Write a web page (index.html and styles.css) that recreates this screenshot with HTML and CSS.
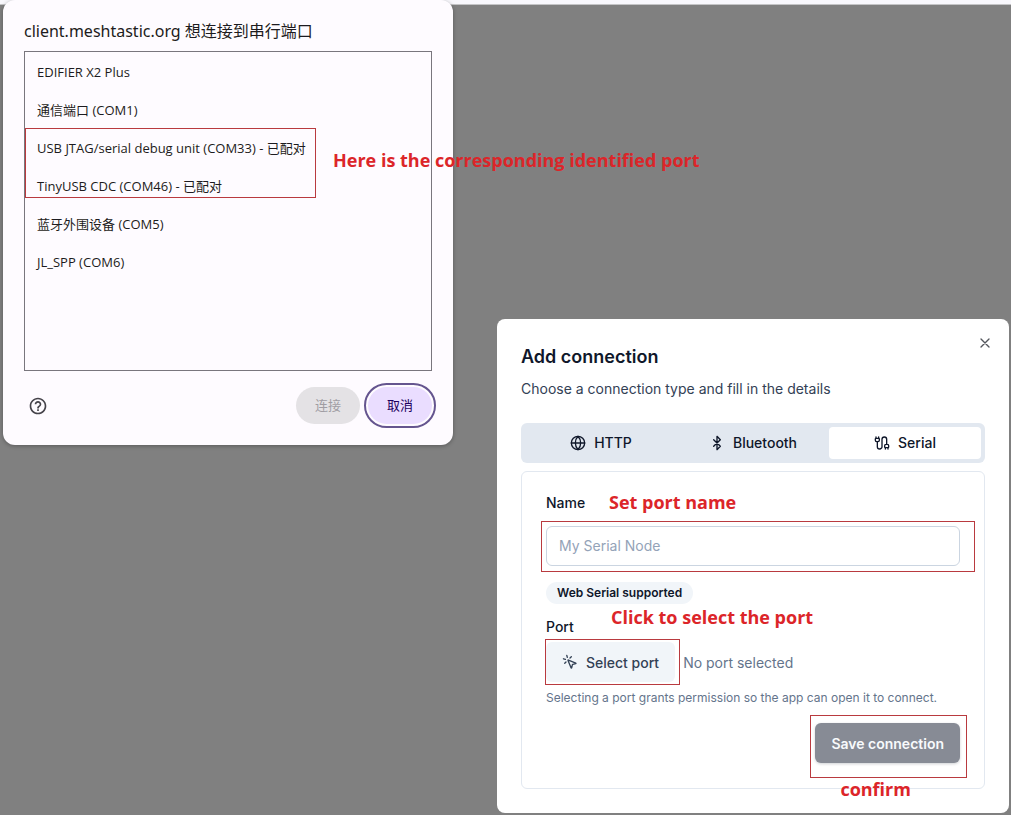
FILE: index.html
```html
<!DOCTYPE html>
<html lang="en">
<head>
  <meta charset="UTF-8">
  <meta name="viewport" content="width=device-width, initial-scale=1">
  <title>Add connection</title>
  <link rel="stylesheet" href="styles.css">
</head>
<body>
  <div class="top-strip"></div>

  <main class="desktop">
    <section class="chooser" role="dialog" aria-labelledby="chooser-title" lang="zh-CN">
      <h1 id="chooser-title">client.meshtastic.org 想连接到串行端口</h1>
      <ul class="port-list">
        <li>EDIFIER X2 Plus</li>
        <li>通信端口 (COM1)</li>
        <li>USB JTAG/serial debug unit (COM33) - 已配对</li>
        <li>TinyUSB CDC (COM46) - 已配对</li>
        <li>蓝牙外围设备 (COM5)</li>
        <li>JL_SPP (COM6)</li>
      </ul>
      <div class="chooser-footer">
        <button type="button" class="help-button" aria-label="帮助">
          <svg width="20" height="20" viewBox="0 0 24 24" fill="#45434a"><path d="M11 18h2v-2h-2v2zm1-16C6.48 2 2 6.48 2 12s4.48 10 10 10 10-4.48 10-10S17.52 2 12 2zm0 18c-4.41 0-8-3.59-8-8s3.59-8 8-8 8 3.59 8 8-3.59 8-8 8zm0-14c-2.210 0-4 1.790-4 4h2c0-1.100.900-2 2-2s2 .900 2 2c0 2-3 1.750-3 5h2c0-2.250 3-2.500 3-5 0-2.210-1.790-4-4-4z"/></svg>
        </button>
        <button type="button" class="pill-button" disabled>连接</button>
        <button type="button" class="pill-button cancel">取消</button>
      </div>
      <div class="mark mark-ports"></div>
      <p class="note note-ports" lang="en">Here is the corresponding identified port</p>
    </section>

    <section class="connection" role="dialog" aria-labelledby="connection-title">
      <button type="button" class="close-button" aria-label="Close">
        <svg class="icon" viewBox="0 0 24 24"><path d="M18 6 6 18M6 6l12 12"/></svg>
      </button>
      <h2 id="connection-title">Add connection</h2>
      <p class="description">Choose a connection type and fill in the details</p>

      <div class="tabs" role="tablist">
        <button type="button" role="tab">
          <svg class="icon" viewBox="0 0 24 24"><circle cx="12" cy="12" r="10"/><path d="M12 2a14.500 14.500 0 0 0 0 20 14.500 14.500 0 0 0 0-20M2 12h20"/></svg>
          HTTP
        </button>
        <button type="button" role="tab">
          <svg class="icon" viewBox="0 0 24 24"><path d="m7 7 10 10-5 5V2l5 5L7 17"/></svg>
          Bluetooth
        </button>
        <button type="button" role="tab" class="active" aria-selected="true">
          <svg class="icon" viewBox="0 0 24 24"><path d="M17 19a1 1 0 0 1-1-1v-2a2 2 0 0 1 2-2h2a2 2 0 0 1 2 2v2a1 1 0 0 1-1 1zM17 21v-2M19 14V6.500a1 1 0 0 0-7 0v11a1 1 0 0 1-7 0V10M21 21v-2M3 5V3M4 10a2 2 0 0 1-2-2V6a1 1 0 0 1 1-1h4a1 1 0 0 1 1 1v2a2 2 0 0 1-2 2zM7 5V3"/></svg>
          Serial
        </button>
      </div>

      <form class="panel">
        <div class="field name-field">
          <label for="node-name">Name</label>
          <input type="text" id="node-name" placeholder="My Serial Node">
          <div class="mark mark-name"></div>
          <span class="note note-name">Set port name</span>
        </div>

        <span class="badge">Web Serial supported</span>

        <div class="field port-field">
          <label for="select-port">Port</label>
          <div class="port-row">
            <button type="button" id="select-port" class="select-button">
              <svg class="icon" viewBox="0 0 24 24"><path d="M14 4.100 12 6M5.100 8l-2.900-.800M6 12l-1.900 2M7.200 2.200 8 5.100M9.037 9.690a.498.498 0 0 1 .653-.653l11 4.500a.500.500 0 0 1-.074.949l-4.349 1.041a1 1 0 0 0-.740.739l-1.040 4.350a.500.500 0 0 1-.950.074z"/></svg>
              Select port
            </button>
            <span class="port-status">No port selected</span>
          </div>
          <p class="hint">Selecting a port grants permission so the app can open it to connect.</p>
          <div class="mark mark-select"></div>
          <span class="note note-select">Click to select the port</span>
        </div>

        <div class="actions">
          <div class="save-wrap">
            <button type="button" class="save-button">Save connection</button>
            <div class="mark mark-save"></div>
            <span class="note note-save">confirm</span>
          </div>
        </div>
      </form>
    </section>
  </main>
</body>
</html>
```

FILE: styles.css
```css
* {
  box-sizing: border-box;
}

body {
  margin: 0;
  min-height: 100vh;
  display: flex;
  flex-direction: column;
  background: #808080;
  font-family: Inter, "Liberation Sans", sans-serif;
  font-size: 14px;
  color: #0f172a;
}

h1,
h2,
p,
ul {
  margin: 0;
  padding: 0;
}

button,
input {
  font-family: inherit;
  font-size: 14px;
}

button {
  border: none;
  cursor: pointer;
}

.icon {
  width: 16px;
  height: 16px;
  flex: none;
  fill: none;
  stroke: currentColor;
  stroke-width: 2;
  stroke-linecap: round;
  stroke-linejoin: round;
}

.top-strip {
  height: 5px;
  background: #f8f7fc;
  border-bottom: 1px solid #c4c4c6;
}

.desktop {
  flex: 1;
  display: flex;
  justify-content: space-between;
  padding: 0 2px 2px 3px;
}

/* browser serial port chooser */
.chooser {
  position: relative;
  align-self: flex-start;
  width: 450px;
  margin-top: -5px;
  padding: 19px 21px 21px;
  border-radius: 12px;
  background: #fefbff;
  box-shadow: 0 1px 4px rgba(0, 0, 0, 0.3);
  font-family: "Noto Sans", "Noto Sans CJK SC", sans-serif;
  color: #1d1b20;
}

.chooser h1 {
  font-size: 16px;
  font-weight: 400;
  line-height: 24px;
  margin-bottom: 8px;
}

.port-list {
  height: 320px;
  padding-top: 1px;
  border: 1px solid #79767d;
  list-style: none;
}

.port-list li {
  height: 38px;
  padding: 0 12px;
  font-family: "Open Sans", "Noto Sans CJK SC", sans-serif;
  font-size: 13px;
  line-height: 38px;
}

.chooser-footer {
  display: flex;
  align-items: center;
  gap: 8px;
  margin-top: 16px;
}

.help-button {
  display: flex;
  margin-right: auto;
  padding: 4px;
  background: none;
}

.pill-button {
  width: 64px;
  height: 37px;
  border-radius: 19px;
  padding: 0 0 2px;
  font-size: 13px;
  color: #a09da3;
  background: #e4e2e5;
}

.pill-button.cancel {
  color: #21005d;
  background: #eaddff;
  outline: 2px solid #65558f;
  outline-offset: 2px;
}

/* add connection dialog */
.connection {
  position: relative;
  align-self: flex-end;
  width: 512px;
  padding: 24px;
  border-radius: 8px;
  background: #fff;
}

.close-button {
  position: absolute;
  top: 16px;
  right: 16px;
  display: flex;
  padding: 0;
  color: #53565c;
  background: none;
}

.connection h2 {
  font-size: 18px;
  font-weight: 600;
  line-height: 28px;
}

.description {
  margin-top: 8px;
  line-height: 20px;
  color: #334155;
}

.tabs {
  display: grid;
  grid-template-columns: repeat(3, 1fr);
  margin-top: 24px;
  padding: 4px;
  height: 40px;
  border-radius: 6px;
  background: #e2e8f0;
}

.tabs button {
  display: flex;
  align-items: center;
  justify-content: center;
  gap: 8px;
  padding: 0 0 1px;
  border-radius: 4px;
  font-weight: 500;
  color: #0f172a;
  background: none;
}

.tabs .active {
  background: #fff;
}

.panel {
  display: flex;
  flex-direction: column;
  gap: 16px;
  margin-top: 8px;
  padding: 24px 24px 25px;
  border: 1px solid #e2e8f0;
  border-radius: 6px;
}

.field {
  position: relative;
}

.field label {
  display: block;
  font-weight: 500;
  line-height: 14px;
}

.field input {
  display: block;
  width: 100%;
  height: 40px;
  margin-top: 16px;
  padding: 0 12px 1px;
  border: 1px solid #cbd5e1;
  border-radius: 6px;
  background: #fff;
}

.field input::placeholder {
  color: #94a3b8;
}

.badge {
  align-self: flex-start;
  padding: 3px 11px;
  border-radius: 11px;
  font-size: 12px;
  font-weight: 600;
  line-height: 16px;
  background: #f1f5f9;
}

.port-row {
  display: flex;
  align-items: center;
  gap: 8px;
  margin-top: 8px;
}

.select-button {
  display: flex;
  align-items: center;
  gap: 8px;
  height: 40px;
  padding: 0 16px;
  border-radius: 6px;
  font-weight: 500;
  color: #334155;
  background: #f1f5f9;
}

.port-status {
  color: #64748b;
}

.hint {
  margin-top: 8px;
  font-size: 12px;
  line-height: 16px;
  color: #64748b;
}

.actions {
  display: flex;
  justify-content: flex-end;
  padding-top: 1px;
}

.save-wrap {
  position: relative;
}

.save-button {
  display: block;
  height: 40px;
  padding: 0 16px;
  border-radius: 6px;
  font-weight: 600;
  color: #f8fafc;
  background: #878b95;
  box-shadow: 0 1px 3px rgba(15, 23, 42, 0.2);
}

/* red guide boxes and notes over the dialogs */
.mark {
  position: absolute;
  border: 1px solid #b93a3f;
  pointer-events: none;
}

.note {
  position: absolute;
  z-index: 1;
  font-family: "Open Sans", sans-serif;
  font-size: 18px;
  font-weight: 700;
  line-height: 24px;
  white-space: nowrap;
  color: #dc2529;
}

.mark-ports {
  top: 128px;
  left: 22px;
  width: 291px;
  height: 70px;
}

.note-ports {
  top: 148px;
  left: 330px;
}

.mark-name {
  top: 25px;
  left: -5px;
  right: -15px;
  height: 51px;
}

.note-name {
  top: -6px;
  left: 63px;
}

.mark-select {
  top: 19px;
  left: -1px;
  width: 135px;
  height: 46px;
}

.note-select {
  top: -15px;
  left: 65px;
}

.mark-save {
  top: -8px;
  right: -7px;
  bottom: -15px;
  left: -5px;
}

.note-save {
  top: 54px;
  left: 25px;
}
```
